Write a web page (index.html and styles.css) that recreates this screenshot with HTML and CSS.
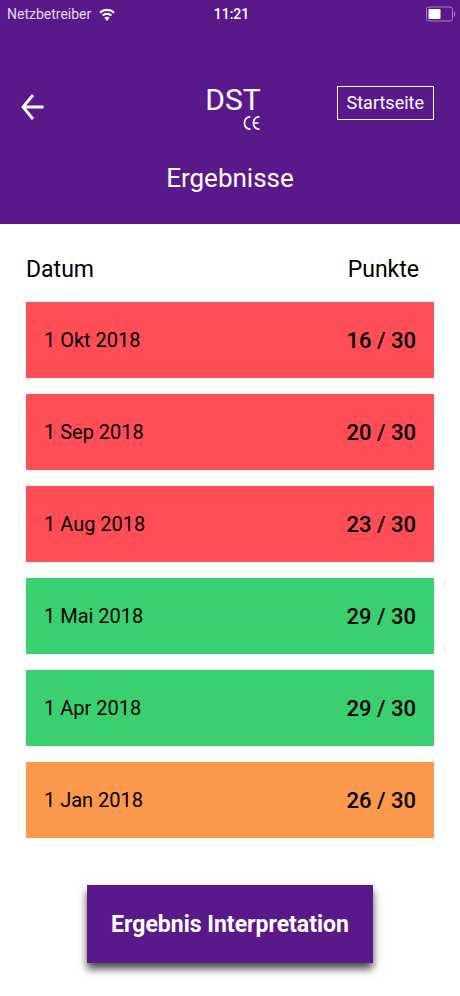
FILE: index.html
```html
<!DOCTYPE html>
<html lang="de">
<head>
  <meta charset="utf-8">
  <meta name="viewport" content="width=device-width, initial-scale=1">
  <title>DST – Ergebnisse</title>
  <link rel="stylesheet" href="styles.css">
</head>
<body>
  <header class="header">
    <div class="status">
      <div class="carrier">
        <span>Netzbetreiber</span>
        <svg class="wifi" viewBox="0 0 16 13" aria-hidden="true">
          <path d="M1 4.6C5 .9 11 .9 15 4.6M3.6 7.5c2.5-2.3 6.3-2.3 8.8 0" fill="none" stroke="currentColor" stroke-width="2.2"/>
          <path d="M5.4 9.8c1.5-1.4 3.7-1.4 5.2 0L8 13z" fill="currentColor"/>
        </svg>
      </div>
      <time class="clock">11:21</time>
      <svg class="battery" viewBox="0 0 30 16" aria-hidden="true">
        <rect x=".5" y="1" width="26" height="14" rx="2.5" fill="none" stroke="#a77fcb"/>
        <rect x="2.5" y="3" width="12" height="10" rx="1" fill="#fff"/>
        <path d="M28 5.5c1.6.6 1.6 4.4 0 5z" fill="#a77fcb"/>
      </svg>
    </div>
    <nav class="bar">
      <button class="back" type="button" aria-label="Zurück">
        <svg class="arrow" viewBox="0 0 24 28" aria-hidden="true">
          <path d="M13 2 3 14l10 12M3 14h20.500" fill="none" stroke="currentColor" stroke-width="2.800"/>
        </svg>
      </button>
      <div class="brand">
        <span class="name">DST</span>
        <svg class="ce" viewBox="0 0 18 14" aria-hidden="true">
          <path d="M7.500 1C-.6.2-.6 13.800 7.500 13M16.500 1C8.400.2 8.400 13.800 16.500 13M10.800 7h4.700" fill="none" stroke="currentColor" stroke-width="1.700"/>
        </svg>
      </div>
      <a class="home" href="#">Startseite</a>
    </nav>
    <h1 class="title">Ergebnisse</h1>
  </header>
  <main class="content">
    <table class="results">
      <thead>
        <tr><th scope="col">Datum</th><th scope="col">Punkte</th></tr>
      </thead>
      <tbody>
        <tr class="low"><td>1 Okt 2018</td><td>16 / 30</td></tr>
        <tr class="low"><td>1 Sep 2018</td><td>20 / 30</td></tr>
        <tr class="low"><td>1 Aug 2018</td><td>23 / 30</td></tr>
        <tr class="high"><td>1 Mai 2018</td><td>29 / 30</td></tr>
        <tr class="high"><td>1 Apr 2018</td><td>29 / 30</td></tr>
        <tr class="medium"><td>1 Jan 2018</td><td>26 / 30</td></tr>
      </tbody>
    </table>
    <button class="interpret" type="button">Ergebnis Interpretation</button>
  </main>
</body>
</html>
```
FILE: styles.css
```css
* {
  box-sizing: border-box;
}

body {
  margin: 0;
  background: #fff;
  color: #000;
  font-family: Roboto, "Liberation Sans", sans-serif;
}

button {
  border: 0;
  font-family: inherit;
}

.header {
  padding-bottom: 28px;
  background: #5a198b;
  color: #fff;
}

.status {
  display: grid;
  grid-template-columns: 1fr auto 1fr;
  align-items: center;
  height: 28px;
  padding: 0 4px 0 7px;
  font-size: 14px;
}

.carrier {
  display: flex;
  align-items: center;
  gap: 8px;
  color: #e6d8f2;
}

.wifi {
  width: 16px;
  height: 13px;
  color: #fff;
}

.clock {
  font-weight: 500;
}

.battery {
  justify-self: end;
  width: 30px;
  height: 16px;
}

.bar {
  display: grid;
  grid-template-columns: 1fr auto 1fr;
  align-items: center;
  margin-top: 56px;
  padding: 0 26px 0 20px;
}

.back {
  justify-self: start;
  padding: 0;
  background: none;
  color: #fff;
  cursor: pointer;
}

.arrow {
  display: block;
  width: 24px;
  height: 28px;
}

.brand {
  display: flex;
  flex-direction: column;
  align-items: flex-end;
  padding-left: 12px;
}

.name {
  font-size: 30px;
  line-height: 32px;
}

.ce {
  width: 18px;
  height: 14px;
}

.home {
  align-self: start;
  justify-self: end;
  margin-top: 2px;
  padding: 0 9px;
  border: 1px solid #fff;
  color: #fff;
  font-size: 18px;
  line-height: 32px;
  text-decoration: none;
}

.title {
  margin: 30px 0 0;
  font-size: 26px;
  font-weight: 400;
  line-height: 36px;
  text-align: center;
}

.content {
  display: flex;
  flex-direction: column;
  align-items: center;
  padding: 0 26px 32px;
}

.results {
  width: 100%;
  border-spacing: 0 16px;
}

th {
  padding: 14px 0 0;
  font-size: 23px;
  font-weight: 400;
  line-height: 32px;
  text-align: left;
}

th:last-child {
  padding-right: 15px;
  text-align: right;
}

td {
  height: 76px;
  padding: 0 18px;
  font-size: 20px;
}

td:last-child {
  font-size: 22px;
  font-weight: 500;
  text-align: right;
}

.low {
  background: #fe4d55;
}

.high {
  background: #3ad070;
}

.medium {
  background: #fb984b;
}

.interpret {
  height: 78px;
  margin-top: 31px;
  padding: 0 24px;
  background: #5a198b;
  box-shadow: 0 6px 8px rgba(0, 0, 0, 0.7);
  color: #fff;
  font-size: 23px;
  font-weight: 700;
  cursor: pointer;
}
```
